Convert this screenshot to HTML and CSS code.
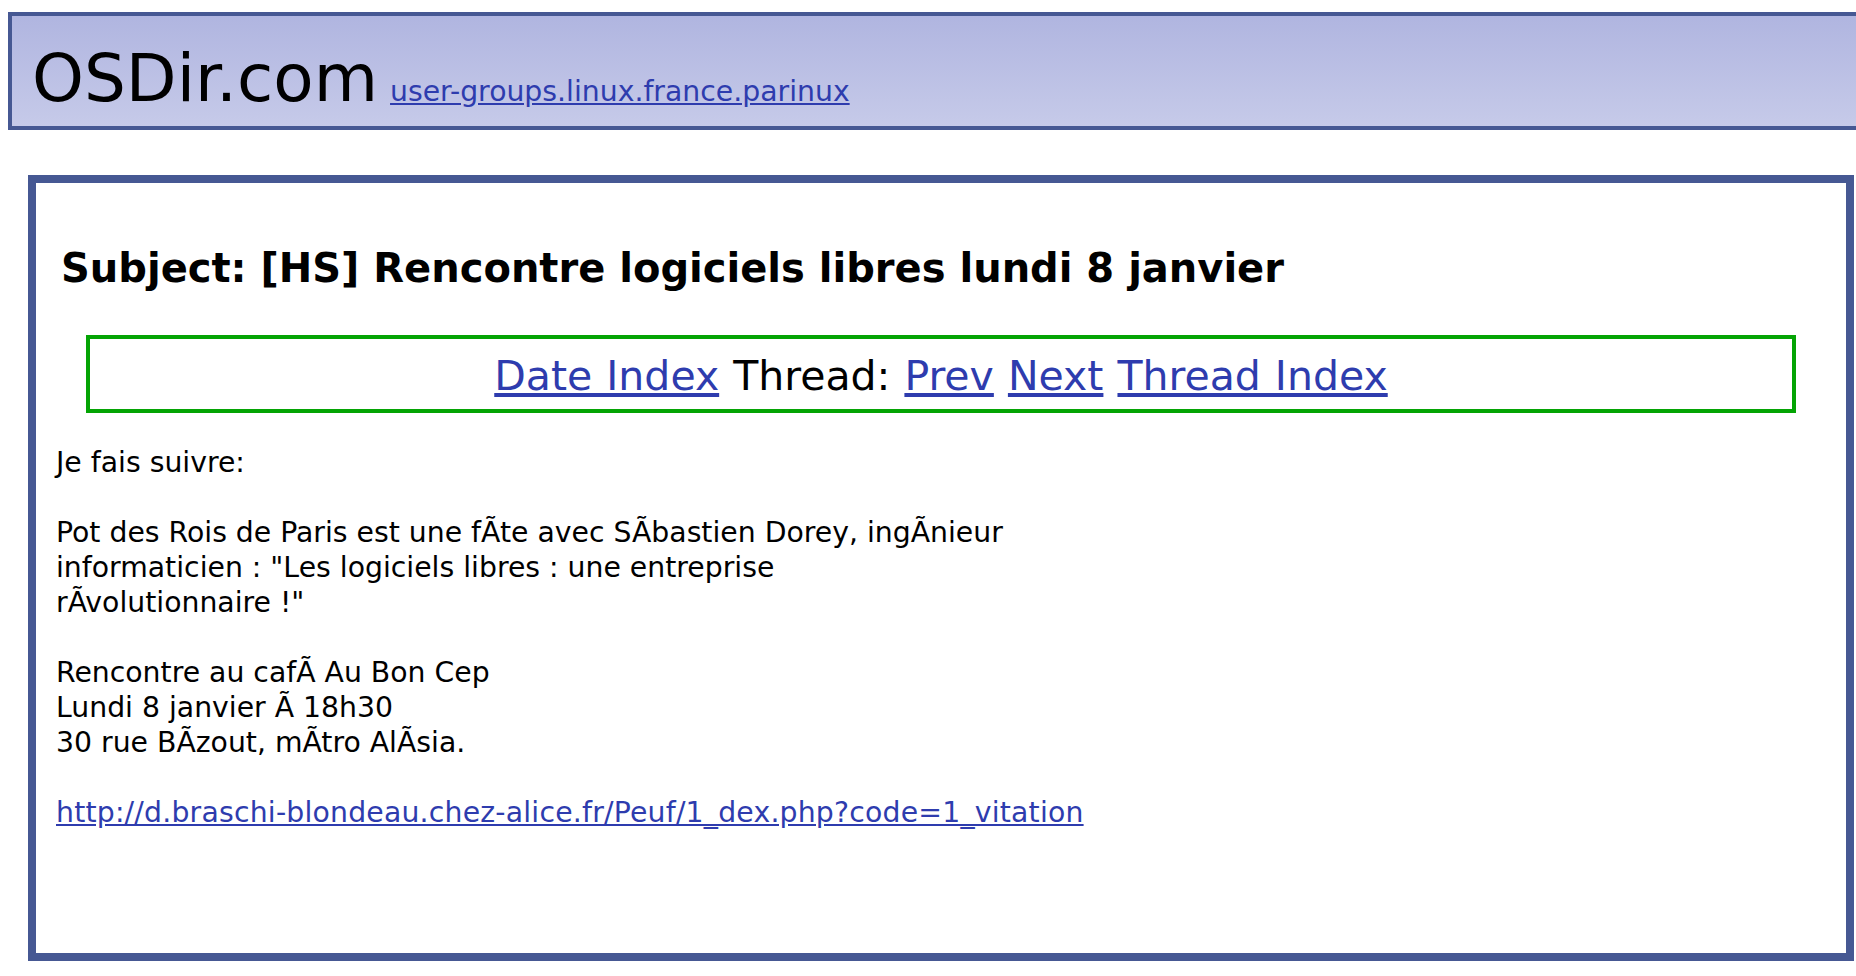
FILE: index.html
```html
<!DOCTYPE html>
<html lang="fr">
<head>
<meta charset="utf-8">
<title>OSDir.com - user-groups.linux.france.parinux</title>
<link rel="stylesheet" href="styles.css">
</head>
<body>
<div class="header"><span class="brand">OSDir.com</span><a class="group-link" href="#">user-groups.linux.france.parinux</a></div>
<div class="message">
  <h1 class="subject">Subject: [HS] Rencontre logiciels libres lundi 8 janvier</h1>
  <div class="nav"><a href="#">Date Index</a> Thread: <a href="#">Prev</a> <a href="#">Next</a> <a href="#">Thread Index</a></div>
  <div class="msg-body">Je fais suivre:<br><br>Pot des Rois de Paris est une fÃte avec SÃbastien Dorey, ingÃnieur<br>informaticien : "Les logiciels libres : une entreprise<br>rÃvolutionnaire !"<br><br>Rencontre au cafÃ Au Bon Cep<br>Lundi 8 janvier Ã 18h30<br>30 rue BÃzout, mÃtro AlÃsia.<br><br><a class="msg-link" href="#">http://d.braschi-blondeau.chez-alice.fr/Peuf/1_dex.php?code=1_vitation</a></div>
</div>
</body>
</html>
```

FILE: styles.css
```css
html {
  overflow: hidden;
  background: #ffffff;
}

body {
  margin: 0;
  font-family: "DejaVu Sans", Verdana, sans-serif;
  color: #000000;
}

a {
  color: #2e3cae;
}

.header {
  box-sizing: border-box;
  margin: 12px 0 0 8px;
  width: 1870px;
  height: 118px;
  border: 4px solid #465893;
  background: linear-gradient(to bottom, #b0b5e0, #c6cae9);
  padding: 25px 0 0 20px;
  font-size: 66px;
  line-height: 76px;
  white-space: nowrap;
}

.brand {
  color: #000000;
}

.group-link {
  margin-left: 12px;
  font-size: 28.3px;
}

.message {
  box-sizing: border-box;
  margin: 45px 0 0 28px;
  width: 1826px;
  height: 786px;
  border: 8px solid #465893;
  background: #ffffff;
}

.subject {
  margin: 62px 0 0 25px;
  font-size: 40px;
  font-weight: bold;
  line-height: 47px;
}

.nav {
  box-sizing: border-box;
  margin: 43px 50px 0 50px;
  height: 78px;
  border: 4px solid #04a404;
  padding-top: 13px;
  text-align: center;
  font-size: 41px;
  line-height: 48px;
  word-spacing: 1px;
}

.msg-body {
  margin: 32px 0 0 20px;
  font-size: 28.3px;
  line-height: 35px;
}

.msg-link {
  letter-spacing: 0.2px;
}
```
